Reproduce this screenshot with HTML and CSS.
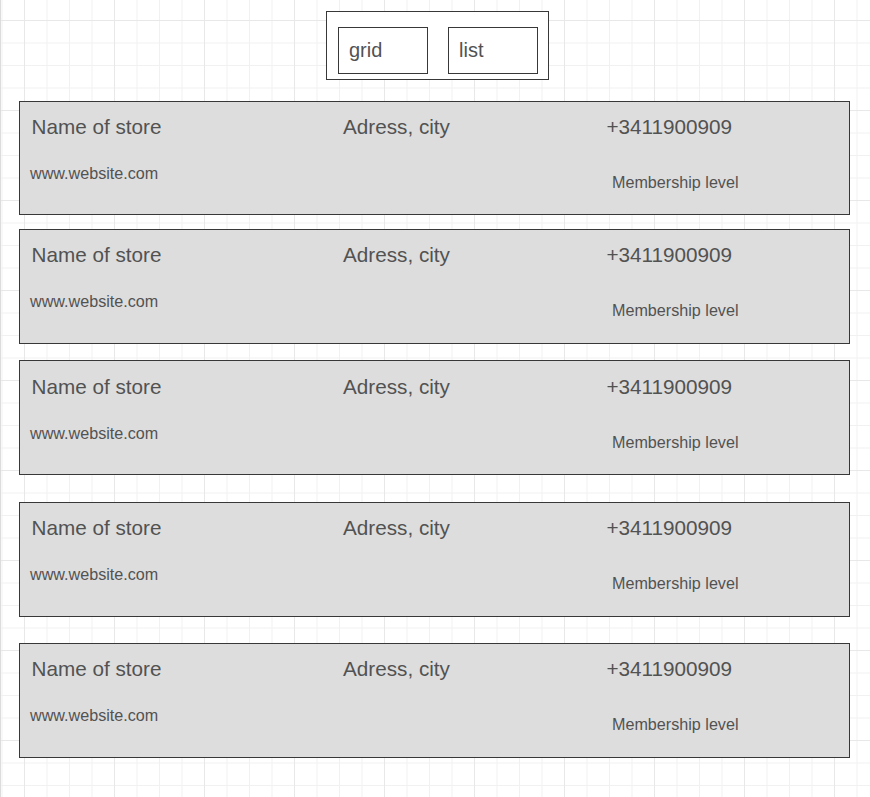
FILE: index.html
```html
<!DOCTYPE html>
<html lang="en">
<head>
<meta charset="utf-8">
<title>Stores</title>
<link rel="stylesheet" href="styles.css">
</head>
<body>
<main class="page">
  <div class="toolbar">
    <div class="toggle">grid</div>
    <div class="toggle">list</div>
  </div>
  <div class="cards">
    <div class="card card-1">
      <div class="row-top"><span class="name">Name of store</span><span class="addr">Adress, city</span><span class="phone">+3411900909</span></div>
      <div class="row-bottom"><span class="site">www.website.com</span><span class="member">Membership level</span></div>
    </div>
    <div class="card card-2">
      <div class="row-top"><span class="name">Name of store</span><span class="addr">Adress, city</span><span class="phone">+3411900909</span></div>
      <div class="row-bottom"><span class="site">www.website.com</span><span class="member">Membership level</span></div>
    </div>
    <div class="card card-3">
      <div class="row-top"><span class="name">Name of store</span><span class="addr">Adress, city</span><span class="phone">+3411900909</span></div>
      <div class="row-bottom"><span class="site">www.website.com</span><span class="member">Membership level</span></div>
    </div>
    <div class="card card-4">
      <div class="row-top"><span class="name">Name of store</span><span class="addr">Adress, city</span><span class="phone">+3411900909</span></div>
      <div class="row-bottom"><span class="site">www.website.com</span><span class="member">Membership level</span></div>
    </div>
    <div class="card card-5">
      <div class="row-top"><span class="name">Name of store</span><span class="addr">Adress, city</span><span class="phone">+3411900909</span></div>
      <div class="row-bottom"><span class="site">www.website.com</span><span class="member">Membership level</span></div>
    </div>
  </div>
</main>
</body>
</html>
```
FILE: styles.css
```css
html, body {
  margin: 0;
  padding: 0;
}
body {
  min-height: 797px;
  font-family: "Liberation Sans", Arial, sans-serif;
  color: #525252;
  background-color: #ffffff;
  background-image:
    linear-gradient(to right, #e8e8e8 1px, transparent 1px),
    linear-gradient(to bottom, #e8e8e8 1px, transparent 1px),
    linear-gradient(to right, #f1f1f1 1px, transparent 1px),
    linear-gradient(to bottom, #f1f1f1 1px, transparent 1px);
  background-size: 90px 90px, 90px 90px, 22.5px 22.5px, 22.5px 22.5px;
  background-position: 24px 20px, 24px 20px, 24px 20px, 24px 20px;
  border-left: 1px solid #dcdcdc;
  box-sizing: border-box;
}
.page {
  padding: 11px 0 0 18px;
}
.toolbar {
  display: flex;
  gap: 20px;
  width: max-content;
  margin-left: 307px;
  padding: 15px 10px 5px 11px;
  border: 1px solid #383838;
  background: #ffffff;
}
.toggle {
  box-sizing: border-box;
  width: 90px;
  height: 47px;
  padding: 10px 0 0 10px;
  border: 1px solid #383838;
  background: #ffffff;
  font-size: 20px;
  line-height: 24px;
}
.cards {
  display: flex;
  flex-direction: column;
  width: 831px;
}
.card {
  box-sizing: border-box;
  height: 114px;
  border: 1px solid #383838;
  background: #dddddd;
  padding: 13px 0 0 10px;
}
.card-1 { margin-top: 21px; }
.card-2 { margin-top: 14px; height: 115px; }
.card-3 { margin-top: 16px; height: 115px; padding-top: 14px; }
.card-4 { margin-top: 27px; height: 115px; }
.card-5 { margin-top: 26px; height: 115px; }
.row-top {
  display: flex;
  font-size: 20.7px;
  line-height: 24px;
}
.name {
  width: 311.5px;
  padding-left: 1.5px;
}
.addr { width: 263px; }
.phone { padding-left: 0.5px; }
.row-bottom {
  display: flex;
  align-items: flex-start;
  font-size: 16.15px;
  line-height: 20px;
}
.site {
  width: 581px;
  margin-top: 24px;
}
.member {
  margin-top: 33px;
  padding-left: 1px;
}
```
